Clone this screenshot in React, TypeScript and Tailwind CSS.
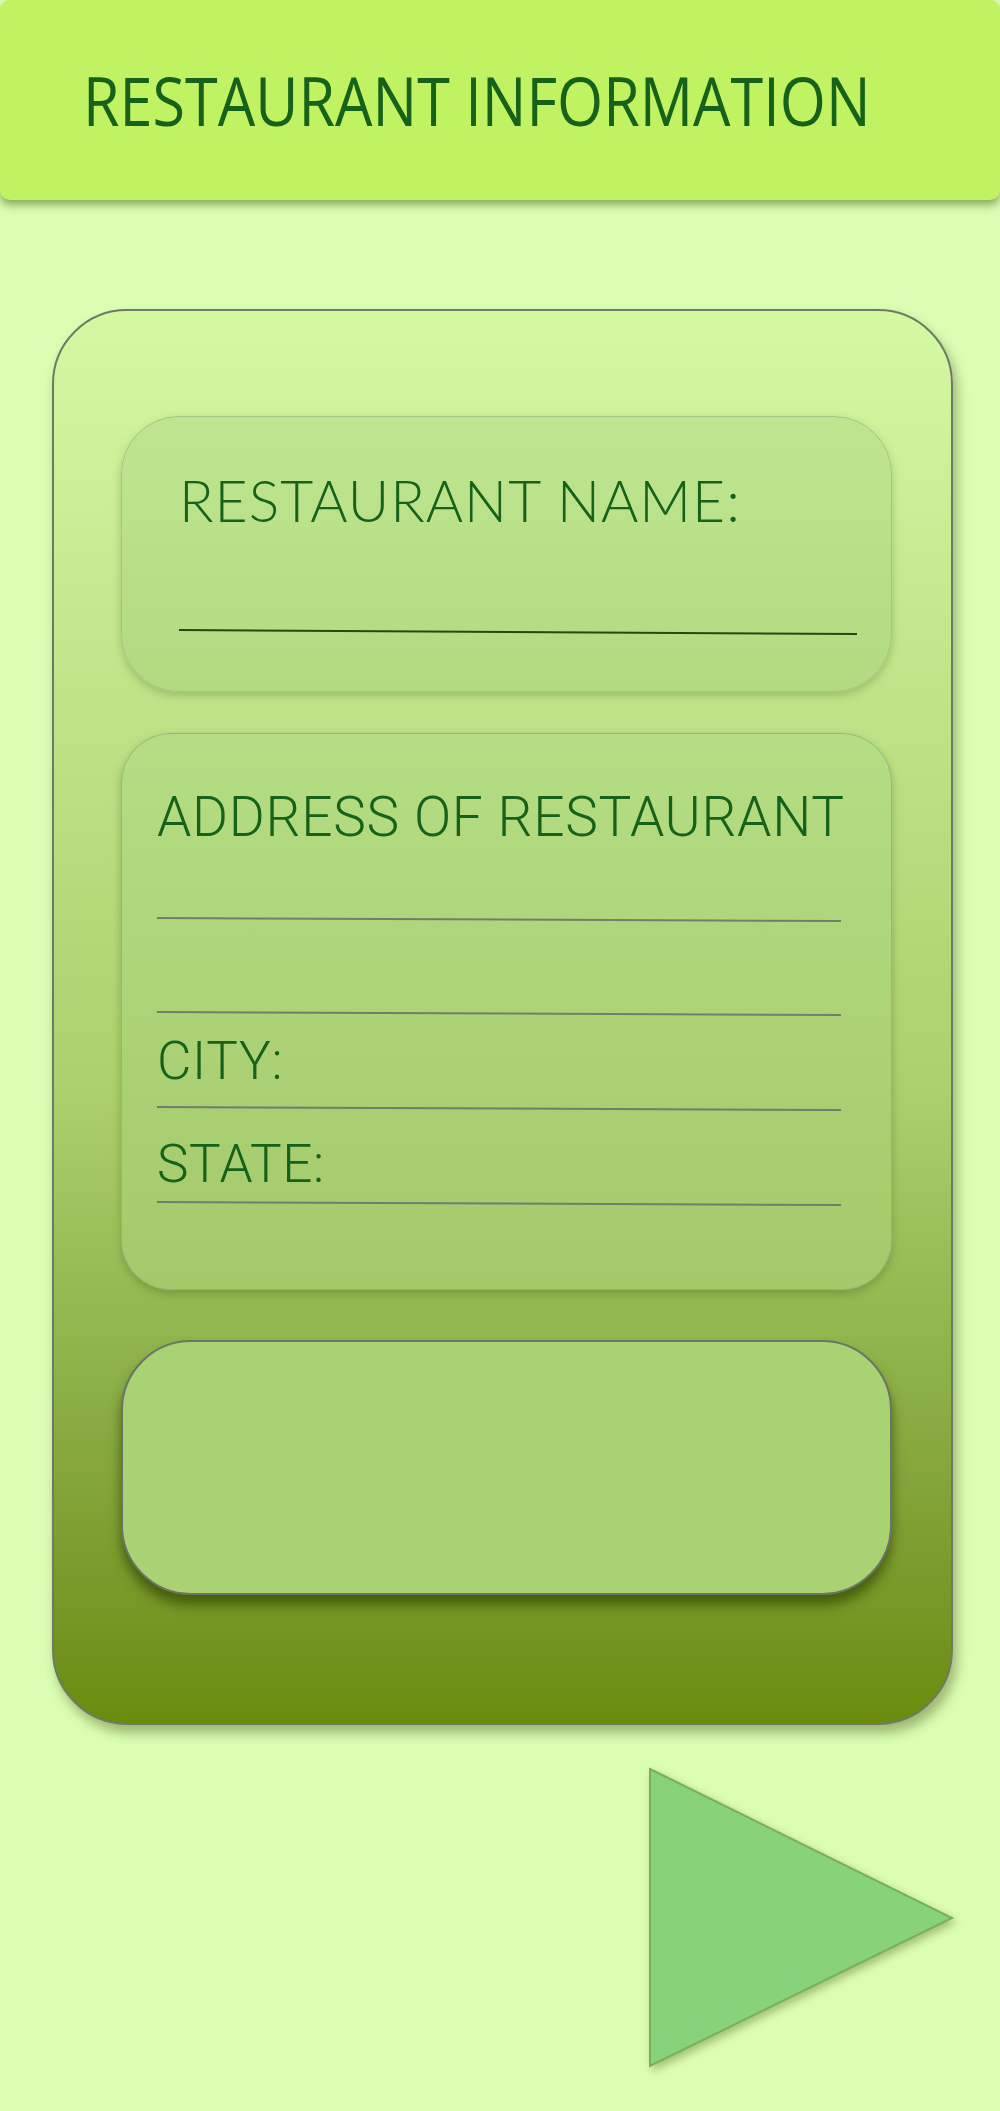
export default function App() {
  return (
    <div className="min-h-[2111px] w-[1000px] bg-[#dcfdb4] flex flex-col">
      <header className="h-[200px] bg-[#c1f262] rounded-[10px] shadow-[0_5px_8px_rgba(70,100,20,0.55)] flex items-center pl-[83px]">
        <h1
          className="origin-left scale-x-[0.885] whitespace-nowrap text-[67px] font-medium leading-none text-[#17621a]"
          style={{ fontFamily: '"Open Sans", sans-serif' }}
        >
          RESTAURANT INFORMATION
        </h1>
      </header>

      <main className="mt-[109px] ml-[52px] w-[901px] h-[1416px] rounded-[75px] border-2 border-[#6f7a66] bg-linear-to-b from-[#d5f8a3] via-[#adcf6d] via-55% to-[#6a8c0c] shadow-[4px_8px_12px_rgba(80,100,30,0.45)] pl-[67px] pt-[105px] flex flex-col">
        <section className="w-[771px] h-[276px] rounded-[58px] border border-[#a3c487] bg-linear-to-b from-[#c0e591] to-[#b2da7f] shadow-[0_4px_8px_rgba(90,120,40,0.35)] pl-[57px] pt-[55px]">
          <div
            className="text-[57px] font-light leading-none tracking-[1px] text-[#17621a]"
            style={{ fontFamily: 'Lato, sans-serif' }}
          >
            RESTAURANT NAME:
          </div>
          <div className="mt-[100px] w-[678px] h-[2px] bg-[#1f4a12] origin-left rotate-[0.34deg]" />
        </section>

        <section
          className="mt-[41px] w-[771px] h-[557px] rounded-[50px] border border-[#98b67a] bg-linear-to-b from-[#b5dd83] to-[#a5c96a] shadow-[0_4px_8px_rgba(80,110,30,0.4)] pl-[35px] pt-[56px] text-[#17621a]"
          style={{ fontFamily: 'Roboto, sans-serif' }}
        >
          <div className="text-[55px] font-light leading-none tracking-[0.7px]">ADDRESS OF RESTAURANT</div>
          <div className="mt-[72px] w-[684px] h-[2px] bg-[#717e6c] origin-left rotate-[0.25deg]" />
          <div className="mt-[92px] w-[684px] h-[2px] bg-[#717e6c] origin-left rotate-[0.25deg]" />
          <div className="mt-[22px] text-[53px] font-light leading-none tracking-[0.7px]">CITY:</div>
          <div className="mt-[18px] w-[684px] h-[2px] bg-[#717e6c] origin-left rotate-[0.25deg]" />
          <div className="mt-[30px] text-[53px] font-light leading-none tracking-[0.7px]">STATE:</div>
          <div className="mt-[10px] w-[684px] h-[2px] bg-[#717e6c] origin-left rotate-[0.25deg]" />
        </section>

        <section className="mt-[50px] w-[771px] h-[255px] rounded-[70px] border-2 border-[#6b7566] bg-[#a9d373] shadow-[0_10px_12px_rgba(50,70,0,0.7)]" />
      </main>

      <div className="mt-[42px] flex justify-end pr-[44px]">
        <svg width="308" height="302" viewBox="0 0 308 302" className="drop-shadow-[3px_4px_4px_rgba(90,120,40,0.45)]">
          <polygon points="2,2 304,151 2,299" fill="#87d27a" stroke="#78b157" strokeWidth="2" />
        </svg>
      </div>
    </div>
  );
}
